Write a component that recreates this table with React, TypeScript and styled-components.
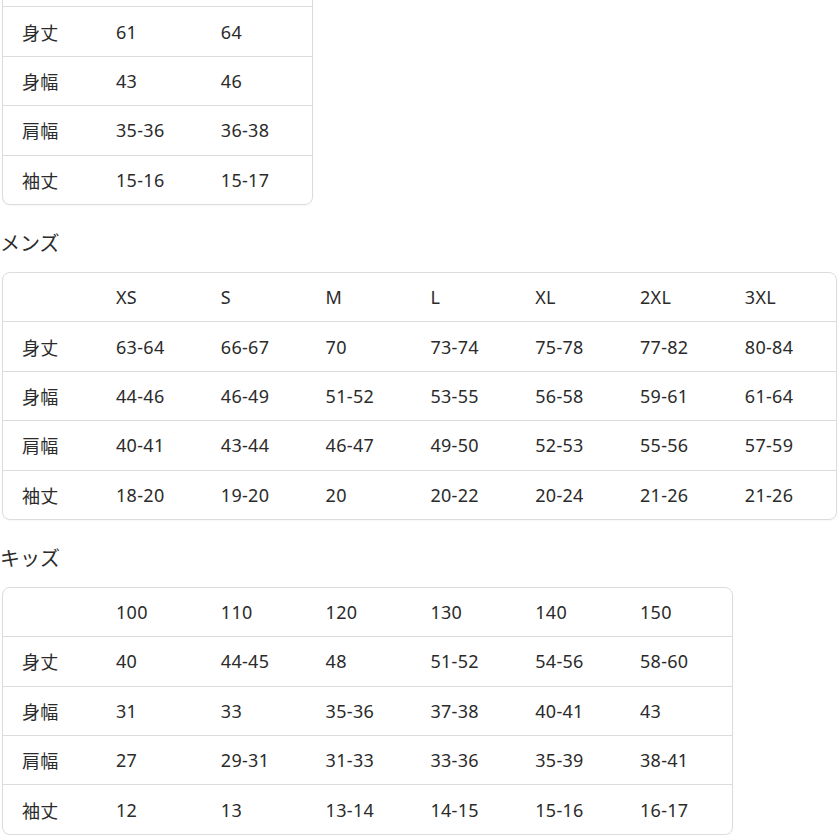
import React from "react";
import styled, { createGlobalStyle } from "styled-components";

const Global = createGlobalStyle`
  html, body { margin: 0; padding: 0; background: #fff; }
  body {
    font-family: "Noto Sans", "Noto Sans CJK JP", sans-serif;
    color: #2b2b2b;
    overflow: hidden;
  }
`;

const Page = styled.div`
  display: flex;
  flex-direction: column;
  padding: 0 2px;
  margin-top: -43px;
`;

const Title = styled.h2`
  margin: 25px 0 14px -2px;
  font-size: 20px;
  line-height: 28px;
  font-weight: 400;
  color: #2b2b2b;
`;

const Table = styled.div<{ $cols: number; $width: number }>`
  display: grid;
  grid-template-columns: 94px repeat(${(p) => p.$cols - 1}, 104.8px) 1fr;
  width: ${(p) => p.$width}px;
  box-sizing: border-box;
  border: 1px solid #dcdcdc;
  border-radius: 8px;
  box-shadow: 0 1px 2px rgba(0, 0, 0, 0.04);
  overflow: hidden;
`;

const Row = styled.div`
  display: contents;
`;

const Cell = styled.div<{ $last: boolean }>`
  height: 48.4px;
  display: flex;
  align-items: center;
  padding-left: 19px;
  font-size: 18px;
  letter-spacing: 0.3px;
  color: #2b2b2b;
  border-bottom: ${(p) => (p.$last ? "none" : "1px solid #dcdcdc")};
  white-space: nowrap;
`;

type TableData = {
  title?: string;
  width: number;
  head: string[];
  rows: string[][];
};

const tables: TableData[] = [
  {
    width: 311,
    head: ["", ""],
    rows: [
      ["身丈", "61", "64"],
      ["身幅", "43", "46"],
      ["肩幅", "35-36", "36-38"],
      ["袖丈", "15-16", "15-17"],
    ],
  },
  {
    title: "メンズ",
    width: 835,
    head: ["XS", "S", "M", "L", "XL", "2XL", "3XL"],
    rows: [
      ["身丈", "63-64", "66-67", "70", "73-74", "75-78", "77-82", "80-84"],
      ["身幅", "44-46", "46-49", "51-52", "53-55", "56-58", "59-61", "61-64"],
      ["肩幅", "40-41", "43-44", "46-47", "49-50", "52-53", "55-56", "57-59"],
      ["袖丈", "18-20", "19-20", "20", "20-22", "20-24", "21-26", "21-26"],
    ],
  },
  {
    title: "キッズ",
    width: 731,
    head: ["100", "110", "120", "130", "140", "150"],
    rows: [
      ["身丈", "40", "44-45", "48", "51-52", "54-56", "58-60"],
      ["身幅", "31", "33", "35-36", "37-38", "40-41", "43"],
      ["肩幅", "27", "29-31", "31-33", "33-36", "35-39", "38-41"],
      ["袖丈", "12", "13", "13-14", "14-15", "15-16", "16-17"],
    ],
  },
];

function SizeTable({ data }: { data: TableData }) {
  const all = [["", ...data.head], ...data.rows];
  return (
    <Table $cols={data.head.length} $width={data.width}>
      {all.map((r, i) => (
        <Row key={i}>
          {r.map((c, j) => (
            <Cell key={j} $last={i === all.length - 1}>
              {c}
            </Cell>
          ))}
        </Row>
      ))}
    </Table>
  );
}

export default function App() {
  return (
    <>
      <Global />
      <Page>
        {tables.map((t, i) => (
          <React.Fragment key={i}>
            {t.title && <Title>{t.title}</Title>}
            <SizeTable data={t} />
          </React.Fragment>
        ))}
      </Page>
    </>
  );
}
